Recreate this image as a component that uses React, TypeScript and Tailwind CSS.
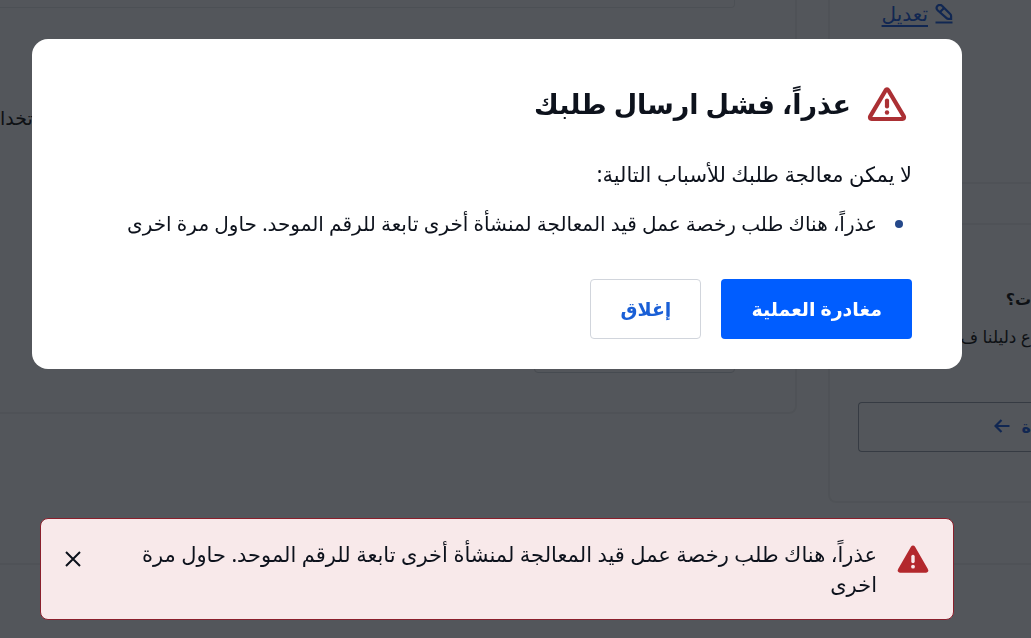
import type { ReactNode } from 'react';

const ERROR_TEXT =
  'عذراً، هناك طلب رخصة عمل قيد المعالجة لمنشأة أخرى تابعة للرقم الموحد. حاول مرة اخرى';

const WarningOutline = () => (
  <svg className="h-9 w-10 shrink-0" viewBox="0 0 40 36" fill="none" aria-hidden="true">
    <path
      d="M18.700 4.200 3.200 30.400c-.8 1.400 0 2.600 1.400 2.600h30.800c1.400 0 2.200-1.200 1.400-2.600L21.300 4.200c-.6-1-2-1-2.600 0Z"
      stroke="#ab3034"
      strokeWidth="4.200"
      strokeLinejoin="round"
    />
    <path d="M20 14.500v6" stroke="#ab3034" strokeWidth="4.200" strokeLinecap="round" />
    <circle cx="20" cy="26.500" r="2.200" fill="#ab3034" />
  </svg>
);

const WarningSolid = () => (
  <svg className="mt-[5px] h-7 w-8 shrink-0" viewBox="0 0 32 28" fill="none" aria-hidden="true">
    <path
      d="M15.400 2.300 2.300 25c-.4.600 0 1.200.6 1.200h26.200c.6 0 1-.6.6-1.200L16.600 2.300c-.3-.5-.9-.5-1.200 0Z"
      fill="#b3282d"
      stroke="#b3282d"
      strokeWidth="3"
      strokeLinejoin="round"
    />
    <path d="M16 11.500v5" stroke="#f8e9ea" strokeWidth="3.400" strokeLinecap="round" />
    <circle cx="16" cy="21.700" r="1.900" fill="#f8e9ea" />
  </svg>
);

const EditIcon = () => (
  <svg className="h-5 w-[18px]" viewBox="0 0 18 20" fill="none" stroke="currentColor" strokeWidth="2.200" aria-hidden="true">
    <path d="M2.600 1.800c1.300-1.300 3.200-1.300 4.400 0l8.200 8.200c.6.600.9 1.300.9 2.100v2.700h-2.700c-.8 0-1.500-.3-2.100-.9L2.600 6.200c-1.200-1.200-1.200-3.100 0-4.400Z" />
    <path d="m4.800 8.300 4.300-4.300M.5 18.500h17" />
  </svg>
);

const ArrowLeft = () => (
  <svg className="h-4 w-4" viewBox="0 0 16 16" fill="none" stroke="currentColor" strokeWidth="2.200" aria-hidden="true">
    <path d="M15.500 7H2M7.500 1 1.500 7l6 6" />
  </svg>
);

const CloseIcon = () => (
  <svg className="h-4 w-4" viewBox="0 0 16 16" fill="none" stroke="currentColor" strokeWidth="2" aria-hidden="true">
    <path d="m1 1 14 14M15 1 1 15" />
  </svg>
);

const Card = ({ className, children }: { className: string; children?: ReactNode }) => (
  <div className={`border-[#eeeff1] ${className}`}>{children}</div>
);

const RequestPage = () => (
  <div className="flex h-screen flex-col overflow-hidden bg-[#fcfcfd] text-[#161616]">
    <div className="flex gap-[31px]">
      {/* Sidebar */}
      <aside className="w-[203px] shrink-0">
        <Card className="h-[184px] rounded-bl-lg border-b-2 border-l-2">
          <a href="#edit" className="mr-[78px] flex w-fit items-center gap-[7px] pt-1 text-[20px] leading-5 text-[#1f5fe0]">
            <EditIcon />
            <span className="underline underline-offset-4">تعديل</span>
          </a>
        </Card>
        <Card className="mt-[39px] h-[280px] rounded-l-lg border-y-2 border-l-2 pt-[58px]">
          <h2 className="text-base leading-8 font-bold">ت؟</h2>
          <p className="mt-2 text-[17px] leading-7 whitespace-nowrap">ع دليلنا ف</p>
          <button
            type="button"
            className="mt-[51px] flex h-[50px] w-[173px] items-center gap-3 rounded-l-sm border-y border-l border-gray-400 text-base font-bold text-[#1f5fe0]"
          >
            <span>ة</span>
            <ArrowLeft />
          </button>
        </Card>
      </aside>

      {/* Request form */}
      <main className="min-w-0 flex-1">
        <Card className="flex h-[414px] flex-col rounded-br-lg border-r-2 border-b-2 pr-[60px]">
          <div className="h-2 rounded-br-sm border-r border-b border-gray-200" />
          <p className="mt-24 self-end text-[19px] leading-7">تخدا</p>
          <div className="mt-auto mb-[39px] h-[50px] w-[201px] rounded-sm border border-gray-300" />
        </Card>
      </main>
    </div>
    <footer className="mt-auto h-[75px] border-t-2 border-[#eeeff1]" />
  </div>
);

const ErrorDialog = () => (
  <section role="alertdialog" aria-labelledby="dialog-title" className="rounded-2xl bg-white px-[50px] pt-10 pb-[30px]">
    <header className="flex items-center gap-4 pr-[5px]">
      <WarningOutline />
      <h1 id="dialog-title" className="text-[27px] leading-[50px] font-bold">
        عذراً، فشل ارسال طلبك
      </h1>
    </header>
    <p className="mt-[30px] text-[21px] leading-[30px]">لا يمكن معالجة طلبك للأسباب التالية:</p>
    <ul className="mt-5">
      <li className="flex items-center gap-[18px] pr-[9px] text-[20px] leading-[30px]">
        <span className="h-2 w-2 shrink-0 rounded-full bg-[#25488a]" />
        {ERROR_TEXT}
      </li>
    </ul>
    <div className="mt-10 flex gap-5">
      <button type="button" className="h-[60px] rounded-sm bg-[#005dff] px-[30px] text-[19px] font-bold text-white">
        مغادرة العملية
      </button>
      <button type="button" className="h-[60px] rounded-sm border border-gray-300 px-[29px] text-[19px] font-bold text-[#1a5fd6]">
        إغلاق
      </button>
    </div>
  </section>
);

const ErrorToast = () => (
  <div role="alert" className="mx-2 flex rounded-lg border border-[#8a1f2c] bg-[#f8e9ea] py-5 pr-6 pl-6">
    <div className="mt-px">
      <WarningSolid />
    </div>
    <p className="mr-5 flex-1 pl-[60px] text-[21px] leading-[30px]">{ERROR_TEXT}</p>
    <button type="button" aria-label="إغلاق" className="h-10 w-4">
      <CloseIcon />
    </button>
  </div>
);

const App = () => (
  <div dir="rtl" lang="ar" className="font-['Noto_Sans','DejaVu_Sans',sans-serif] text-[#0d121c]">
    <RequestPage />
    <div className="fixed inset-0 flex flex-col justify-between bg-[#0b0f15]/70 pt-[39px] pr-[69px] pb-[18px] pl-8">
      <ErrorDialog />
      <ErrorToast />
    </div>
  </div>
);

export default App;
